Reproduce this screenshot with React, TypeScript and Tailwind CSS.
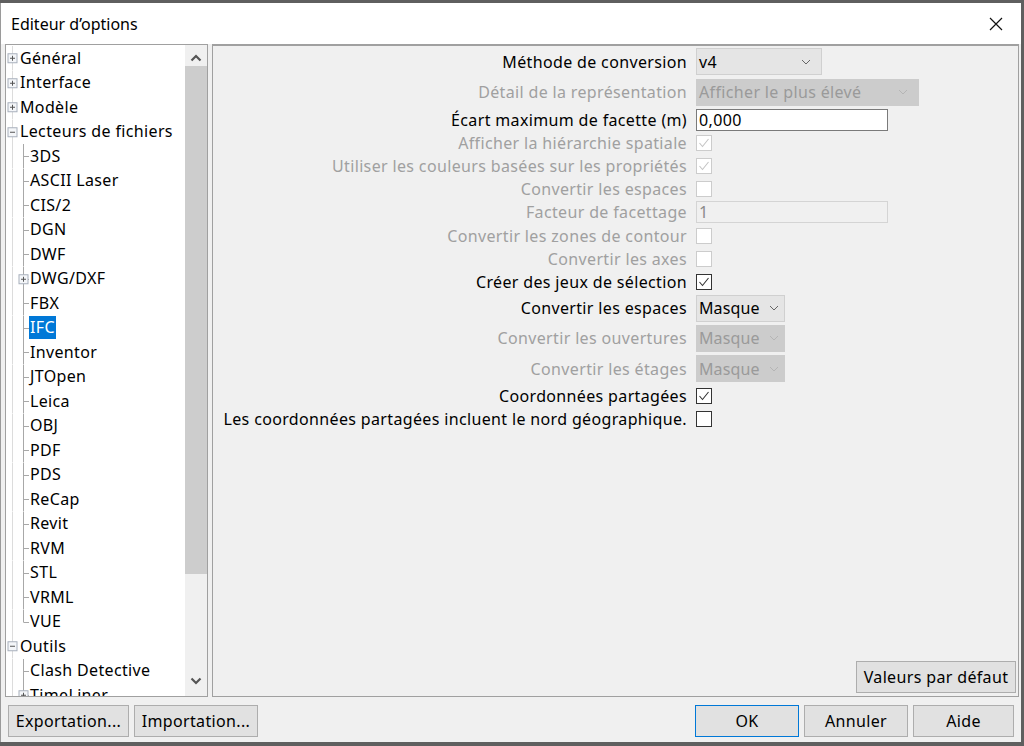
import React from 'react';

const font = { fontFamily: '"Noto Sans", "Open Sans", sans-serif' };

type TreeItem = {
  label: string;
  level: 0 | 1;
  box?: 'plus' | 'minus';
  selected?: boolean;
  last?: boolean;
};

const tree: TreeItem[] = [
  { label: 'Général', level: 0, box: 'plus' },
  { label: 'Interface', level: 0, box: 'plus' },
  { label: 'Modèle', level: 0, box: 'plus' },
  { label: 'Lecteurs de fichiers', level: 0, box: 'minus' },
  { label: '3DS', level: 1 },
  { label: 'ASCII Laser', level: 1 },
  { label: 'CIS/2', level: 1 },
  { label: 'DGN', level: 1 },
  { label: 'DWF', level: 1 },
  { label: 'DWG/DXF', level: 1, box: 'plus' },
  { label: 'FBX', level: 1 },
  { label: 'IFC', level: 1, selected: true },
  { label: 'Inventor', level: 1 },
  { label: 'JTOpen', level: 1 },
  { label: 'Leica', level: 1 },
  { label: 'OBJ', level: 1 },
  { label: 'PDF', level: 1 },
  { label: 'PDS', level: 1 },
  { label: 'ReCap', level: 1 },
  { label: 'Revit', level: 1 },
  { label: 'RVM', level: 1 },
  { label: 'STL', level: 1 },
  { label: 'VRML', level: 1 },
  { label: 'VUE', level: 1, last: true },
  { label: 'Outils', level: 0, box: 'minus' },
  { label: 'Clash Detective', level: 1 },
  { label: 'TimeLiner', level: 1, box: 'plus' },
];

function Box({ x, kind }: { x: number; kind: 'plus' | 'minus' }) {
  return (
    <g>
      <rect x={x + 0.5} y={7.75} width={9} height={9} fill="#f4f6f9" stroke="#a8b0bc" />
      <line x1={x + 2.5} y1={12.25} x2={x + 7.5} y2={12.25} stroke="#555" />
      {kind === 'plus' && <line x1={x + 5} y1={9.75} x2={x + 5} y2={14.75} stroke="#555" />}
    </g>
  );
}

function Gutter({ item }: { item: TreeItem }) {
  const w = item.level === 0 ? 14 : 24;
  return (
    <svg width={w} height={24.5} className="shrink-0">
      <line x1={6.5} y1={0} x2={6.5} y2={24.5} stroke="#dcdcdc" />
      {item.level === 0 && item.box && <Box x={1.5} kind={item.box} />}
      {item.level === 1 && (
        <>
          <line x1={17.5} y1={0} x2={17.5} y2={item.last ? 12.25 : 24.5} stroke="#a8a8a8" />
          <line x1={17.5} y1={12.5} x2={23} y2={12.5} stroke="#a8a8a8" />
          {item.box && <Box x={12.5} kind={item.box} />}
        </>
      )}
    </svg>
  );
}

function Chevron({ dir, color = '#555' }: { dir: 'up' | 'down'; color?: string }) {
  return (
    <svg width="12" height="8" viewBox="0 0 12 8">
      <path
        d={dir === 'up' ? 'M1.5 6.5 L6 2 L10.5 6.5' : 'M1.5 1.5 L6 6 L10.5 1.5'}
        fill="none"
        stroke={color}
        strokeWidth="2.2"
      />
    </svg>
  );
}

function SmallChevron({ color }: { color: string }) {
  return (
    <svg width="10" height="6" viewBox="0 0 10 6" className="shrink-0">
      <path d="M1 1 L5 5 L9 1" fill="none" stroke={color} strokeWidth="1" />
    </svg>
  );
}

function Check({ checked, disabled }: { checked?: boolean; disabled?: boolean }) {
  return (
    <div
      className={`w-[16px] h-[16px] border flex items-center justify-center ${
        disabled ? 'border-[#cccccc] bg-white' : 'border-[#333333] bg-white'
      }`}
    >
      {checked && (
        <svg width="14" height="14" viewBox="0 0 14 14">
          <path
            d="M2.5 7 L5.5 10.5 L11.5 3"
            fill="none"
            stroke={disabled ? '#c4c4c4' : '#333'}
            strokeWidth="1.1"
          />
        </svg>
      )}
    </div>
  );
}

function Combo({ value, width, disabled, tight }: { value: string; width: number; disabled?: boolean; tight?: boolean }) {
  return (
    <div
      className={`h-[27px] flex items-center justify-between pl-[2px] border ${tight ? 'pr-[5px]' : 'pr-[10px]'} ${
        disabled ? 'bg-[#cccccc] border-[#cccccc] text-[#9a9a9a]' : 'bg-[#e5e5e5] border-[#d0d0d0] text-black'
      }`}
      style={{ width }}
    >
      <span className={tight ? 'tracking-[0.1px]' : ''}>{value}</span>
      <SmallChevron color={disabled ? '#b5b5b5' : '#666'} />
    </div>
  );
}

type Row = {
  label: string;
  h: number;
  disabled?: boolean;
  control: React.ReactNode;
};

const rows: Row[] = [
  { label: 'Méthode de conversion', h: 31, control: <Combo value="v4" width={126} /> },
  {
    label: 'Détail de la représentation',
    h: 30,
    disabled: true,
    control: <Combo value="Afficher le plus élevé" width={223} disabled />,
  },
  {
    label: 'Écart maximum de facette (m)',
    h: 25,
    control: (
      <div className="w-[192px] h-[22px] bg-white border border-[#7a7a7a] flex items-center pl-[2px] text-black">
        0,000
      </div>
    ),
  },
  { label: 'Afficher la hiérarchie spatiale', h: 22, disabled: true, control: <Check checked disabled /> },
  { label: 'Utiliser les couleurs basées sur les propriétés', h: 23, disabled: true, control: <Check checked disabled /> },
  { label: 'Convertir les espaces', h: 23, disabled: true, control: <Check disabled /> },
  {
    label: 'Facteur de facettage',
    h: 24,
    disabled: true,
    control: (
      <div className="w-[192px] h-[22px] bg-[#f0f0f0] border border-[#d4d4d4] flex items-center pl-[2px] text-[#8a8a8a]">
        1
      </div>
    ),
  },
  { label: 'Convertir les zones de contour', h: 23, disabled: true, control: <Check disabled /> },
  { label: 'Convertir les axes', h: 23, disabled: true, control: <Check disabled /> },
  { label: 'Créer des jeux de sélection', h: 23, control: <Check checked /> },
  { label: 'Convertir les espaces', h: 30, control: <Combo value="Masque" width={89} tight /> },
  { label: 'Convertir les ouvertures', h: 30, disabled: true, control: <Combo value="Masque" width={89} disabled tight /> },
  { label: 'Convertir les étages', h: 31, disabled: true, control: <Combo value="Masque" width={89} disabled tight /> },
  { label: 'Coordonnées partagées', h: 23, control: <Check checked /> },
  { label: 'Les coordonnées partagées incluent le nord géographique.', h: 23, control: <Check /> },
];

function Button({ children, width, primary }: { children: React.ReactNode; width: number; primary?: boolean }) {
  return (
    <div
      className={`h-[32px] flex items-center justify-center bg-[#e1e1e1] border text-black ${
        primary ? 'border-[#0078d7]' : 'border-[#adadad]'
      }`}
      style={{ width }}
    >
      {children}
    </div>
  );
}

export default function App() {
  return (
    <div className="w-[1024px] h-[746px] bg-[#5f5f5f] overflow-hidden text-[16px] tracking-[0.35px]" style={font}>
      <div className="w-[1021px] h-[739px] mt-[3px] bg-[#f0f0f0] border-l border-[#9a9a9a] flex flex-col">
        {/* title bar */}
        <div className="h-[41px] bg-white flex items-center justify-between pl-[10px] pr-[18px] shrink-0">
          <span className="text-[16px] tracking-normal text-black">Editeur d’options</span>
          <svg width="14" height="14" viewBox="0 0 14 14">
            <path d="M1 1 L13 13 M13 1 L1 13" stroke="#111" strokeWidth="1.2" />
          </svg>
        </div>

        {/* body */}
        <div className="flex h-[653px] shrink-0">
          {/* tree */}
          <div className="ml-[4px] w-[203px] border border-[#a0a0a0] bg-white flex">
            <div className="flex-1 overflow-hidden text-black pt-[1px]">
              {tree.map((item, i) => (
                <div key={i} className="h-[24.5px] flex items-center whitespace-nowrap">
                  <Gutter item={item} />
                  <span
                    className={`leading-[23px] h-[23px] ${
                      item.selected ? 'bg-[#0078d7] text-white px-[1px] -ml-[1px]' : ''
                    }`}
                  >
                    {item.label}
                  </span>
                </div>
              ))}
            </div>
            <div className="w-[22px] bg-[#f0f0f0] flex flex-col items-center">
              <div className="h-[24px] flex items-center justify-center pt-[1px]">
                <Chevron dir="up" />
              </div>
              <div className="w-full h-[508px] mt-[-3px] bg-[#cdcdcd]" />
              <div className="flex-1" />
              <div className="h-[22px] flex items-center justify-center mb-[4px]">
                <Chevron dir="down" />
              </div>
            </div>
          </div>

          {/* options panel */}
          <div className="ml-[4px] w-[807px] border border-t-2 border-[#a0a0a0] flex flex-col">
            <div className="flex flex-col">
              {rows.map((r, i) => (
                <div key={i} className="flex items-center" style={{ height: r.h }}>
                  <div
                    className={`w-[483px] pr-[9px] text-right whitespace-nowrap ${
                      r.disabled ? 'text-[#a0a0a0]' : 'text-black'
                    }`}
                  >
                    {r.label}
                  </div>
                  {r.control}
                </div>
              ))}
            </div>
            <div className="flex-1" />
            <div className="flex justify-end pr-[2px] pb-[3px]">
              <Button width={160}>Valeurs par défaut</Button>
            </div>
          </div>
        </div>

        {/* footer */}
        <div className="flex items-center pt-[8px] pl-[7px]">
          <div className="flex gap-[5px]">
            <Button width={121}>Exportation...</Button>
            <Button width={124}>Importation...</Button>
          </div>
          <div className="flex-1" />
          <div className="flex gap-[5px] pr-[7px]">
            <Button width={104} primary>
              OK
            </Button>
            <Button width={104}>Annuler</Button>
            <Button width={101}>Aide</Button>
          </div>
        </div>
      </div>
    </div>
  );
}
